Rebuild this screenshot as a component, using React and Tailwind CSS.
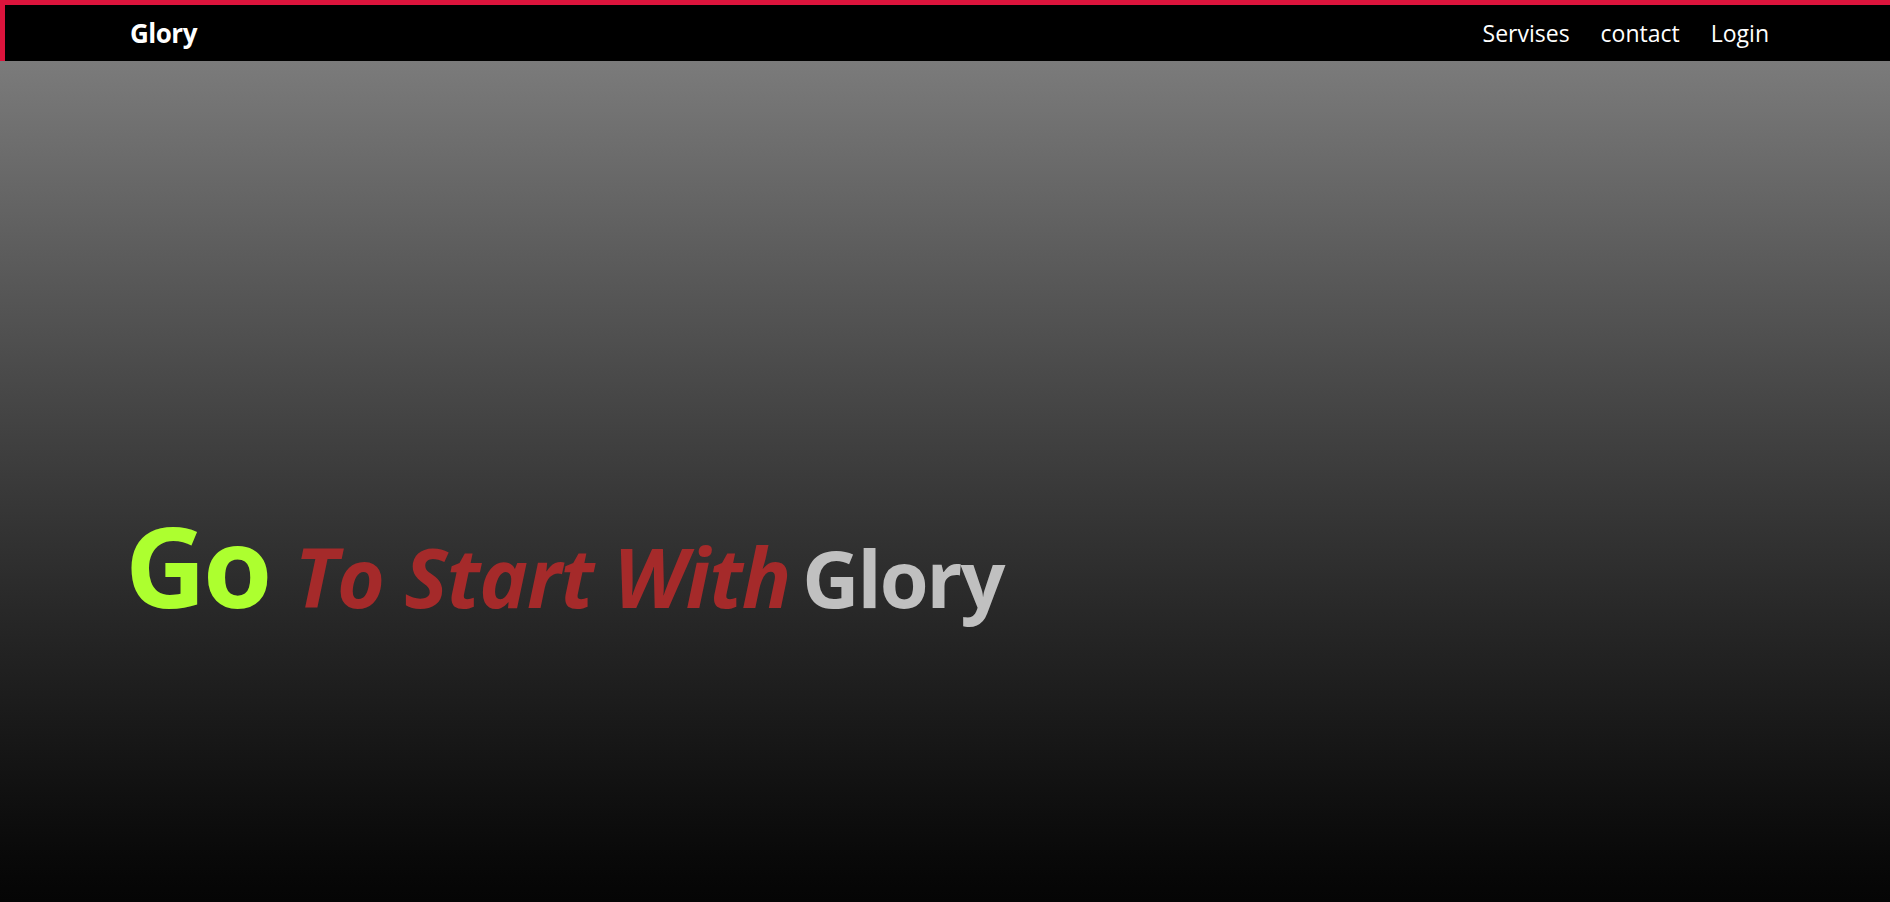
import React from 'react';

const links = ['Servises', 'contact', 'Login'];

const Navbar = () => {
  return (
    <nav className="flex h-[61px] items-center justify-between border-t-[5px] border-l-[5px] border-[#dc143c] bg-black pl-[125px] pr-[121px]">
      <a href="#" className="text-[26px] font-bold tracking-[-0.5px] text-white">Glory</a>
      <ul className="flex items-center gap-[31px]">
        {links.map(link => (
          <li key={link}>
            <a href="#" className="text-[23px] text-white">{link}</a>
          </li>
        ))}
      </ul>
    </nav>
  );
};

const Hero = () => {
  return (
    <section className="flex h-[841px] items-start bg-gradient-to-b from-[#7b7b7b] to-[#050505] pl-[125px] pt-[448px]">
      <h1 className="flex items-baseline font-bold leading-none">
        <span className="text-[112px] tracking-[-3px] text-[#adff2f]">Go</span>
        <span className="ml-[25px] text-[82px] italic tracking-[-1px] text-[#a52a2a]">To Start With</span>
        <span className="ml-[12px] text-[79px] tracking-[-2px] text-[#c0c0c0]">Glory</span>
      </h1>
    </section>
  );
};

export default function App() {
  return (
    <div className="min-h-screen overflow-hidden bg-black font-['Open_Sans',sans-serif]">
      <Navbar />
      <Hero />
    </div>
  );
}
